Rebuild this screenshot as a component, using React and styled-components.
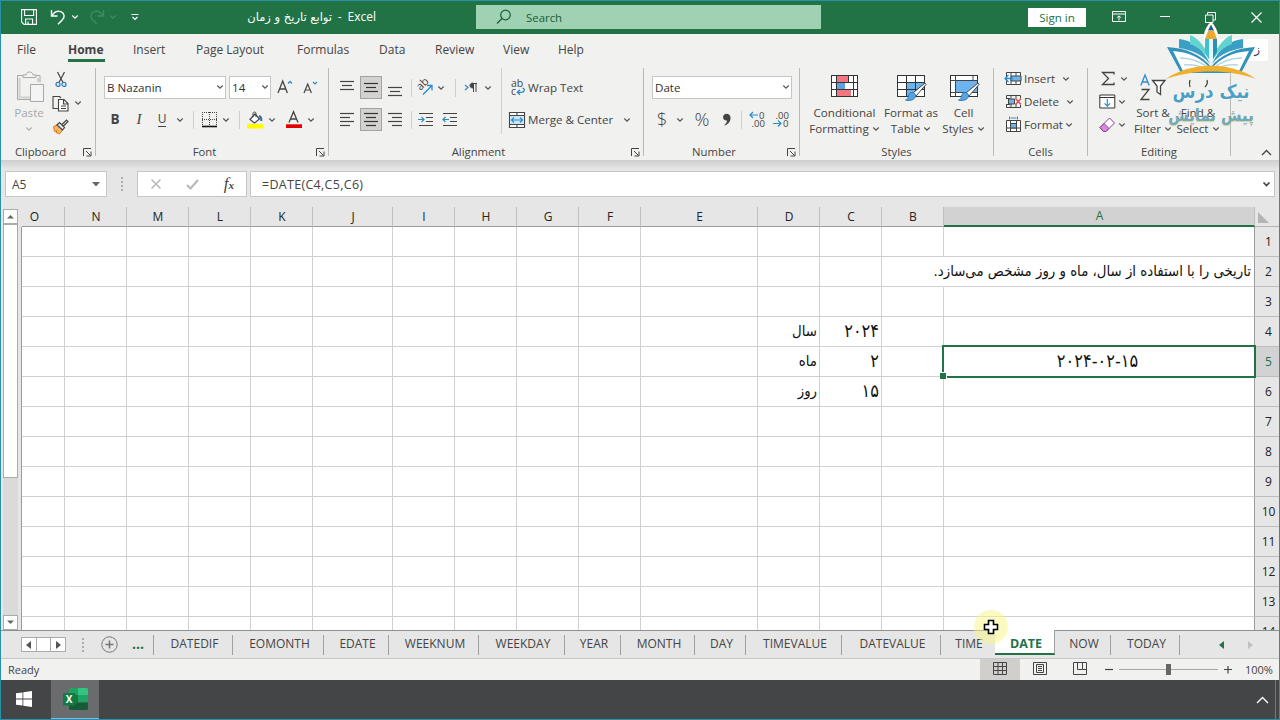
import React from "react";
import styled, { createGlobalStyle, css } from "styled-components";

const sheetTabs = [
  { name: "DATEDIF", width: 79 },
  { name: "EOMONTH", width: 91 },
  { name: "EDATE", width: 65 },
  { name: "WEEKNUM", width: 90 },
  { name: "WEEKDAY", width: 86 },
  { name: "YEAR", width: 56 },
  { name: "MONTH", width: 74 },
  { name: "DAY", width: 51 },
  { name: "TIMEVALUE", width: 96 },
  { name: "DATEVALUE", width: 99 },
  { name: "TIME", width: 54 },
  { name: "DATE", width: 60, active: true },
  { name: "NOW", width: 56 },
  { name: "TODAY", width: 69 },
];

// the sheet is right-to-left, so column A is the last one on screen
const columns = ["O", "N", "M", "L", "K", "J", "I", "H", "G", "F", "E", "D", "C", "B", "A"];
const columnSizes = "43px 62px 62px 62px 62px 80px 62px 62px 62px 62px 117px 62px 62px 62px 311px";
const rows = Array.from({ length: 14 }, (_, i) => i + 1);

const values = {
  A2: "تاریخی را با استفاده از سال، ماه و روز مشخص می‌سازد.",
  D4: "سال",
  C4: "۲۰۲۴",
  D5: "ماه",
  C5: "۲",
  A5: "۲۰۲۴-۰۲-۱۵",
  D6: "روز",
  C6: "۱۵",
};

const menu = [
  { name: "File", gap: 16, width: 19 },
  { name: "Home", gap: 32, width: 37 },
  { name: "Insert", gap: 28, width: 32 },
  { name: "Page Layout", gap: 31, width: 71 },
  { name: "Formulas", gap: 30, width: 53 },
  { name: "Data", gap: 29, width: 27 },
  { name: "Review", gap: 29, width: 40 },
  { name: "View", gap: 28, width: 27 },
  { name: "Help", gap: 28, width: 27 },
];

// Small drawings

const Svg = ({ w, h, children, ...rest }) => (
  <svg width={w} height={h} viewBox={`0 0 ${w} ${h}`} fill="none" stroke="#444" strokeWidth="1" {...rest}>
    {children}
  </svg>
);

const Chevron = ({ color = "#555" }) => (
  <Svg w={8} h={6} stroke={color} strokeWidth="1.2">
    <path d="M1.3 1.5 4 4.2 6.7 1.5" />
  </Svg>
);

const Launcher = () => (
  <Svg w={9} h={9}>
    <path d="M.5 8V.5H8M3 3l4.5 4.5M8 3.5V8H3.5" />
  </Svg>
);

const Lines = ({ rows: list, boxed }) => (
  <Svg w={16} h={18} stroke={boxed ? "#333" : "#444"} strokeWidth="1.2">
    {list.map(([y, x, len]) => (
      <path key={y} d={`M${x} ${y}h${len}`} />
    ))}
  </Svg>
);

const SaveIcon = () => (
  <Svg w={16} h={16} stroke="#fff" strokeWidth="1.1">
    <path d="M.6.6h14.8v14.8H3L.6 13zM3.6.8v5.7h9V.8M4.6 15.2V10h7v5.2M7 12.5v2.5" />
  </Svg>
);

const UndoIcon = ({ flip, color = "#fff" }) => (
  <Svg w={16} h={16} stroke={color} strokeWidth="1.4">
    <path
      transform={flip ? "matrix(-1 0 0 1 16 0)" : undefined}
      d="M1.5 1v6h6M1.5 7C4 3.2 7.500 1.500 10.800 2.600c3.600 1.300 4.300 5.300 1.800 8L8 15.300"
    />
  </Svg>
);

const PasteIcon = () => (
  <Svg w={30} h={32} stroke="#a8a8a8">
    <path d="M7 4.5H1.5v24H15M20 4.5h4v7" />
    <path d="M3.5 7v19.5H15M22 7v4" stroke="#d0d0d0" strokeWidth="2" />
    <path d="M7 6.5V4h3c0-4 7-4 7 0h3v2.5z" fill="#f4f4f4" />
    <path d="M14.500 13.500h13v17h-13z" fill="#f4f4f4" />
  </Svg>
);

const CutIcon = () => (
  <Svg w={12} h={17} strokeWidth="1.2">
    <path d="M2.5 1 8 11.5M9.5 1 4 11.5" />
    <circle cx="3" cy="13.4" r="2" stroke="#2b7cbf" />
    <circle cx="9" cy="13.4" r="2" stroke="#2b7cbf" />
  </Svg>
);

const CopyIcon = () => (
  <Svg w={17} h={17} strokeWidth="1.1">
    <path d="M6 13.5H1V1.5h6.5L9 3" />
    <path d="M6.5 4.5H12l4 4V16H6.5zM11.5 4.5V9H16M9 11h5M9 13.5h5" fill="#fff" />
  </Svg>
);

const PainterIcon = () => (
  <Svg w={17} h={16}>
    <path d="M1.500 7.500 5 6l5.500 5-3 4-3.500-1.500 1-2-2.500 1z" fill="#fbb565" stroke="#d97a1c" />
    <path d="m5 6 2.500-2.500 5 5L10.500 11zM10 5.500l4.500-4.500 1.500 1.500L11.500 7" fill="#ededed" strokeWidth="1.2" />
  </Svg>
);

const BorderIcon = () => (
  <Svg w={17} h={17}>
    <path d="M1 1.500h15M1.500 1v13M15.500 1v13M1 8.500h15M8.500 1v13" strokeDasharray="1 1" />
    <path d="M1 15.500h15" stroke="#111" strokeWidth="1.6" />
  </Svg>
);

const FillIcon = () => (
  <Svg w={18} h={18}>
    <path d="M4 8.500 9 3l4.500 5L8.500 12z" fill="#fff" strokeWidth="1.2" />
    <path d="M7 6V2.500c0-2 3-2 3 0V6" />
    <path d="M13 5c2.500.500 2.500 3 2.300 5" stroke="#2b6cb0" strokeWidth="2" />
    <rect x="1" y="13" width="16" height="4.5" fill="#ffff00" stroke="none" />
  </Svg>
);

const FontColorIcon = () => (
  <Svg w={17} h={18} strokeWidth="1.3">
    <path d="M4 11.500 8.500.800l4.500 10.700M5.500 8h6" />
    <rect x="1" y="13.3" width="16" height="3.7" fill="#e00000" stroke="none" />
  </Svg>
);

const AngleTextIcon = () => (
  <Svg w={18} h={17}>
    <text transform="translate(4.5 12) rotate(-45)" fontSize="11" fill="#444" stroke="none" fontFamily="Open Sans, sans-serif">
      ab
    </text>
    <path d="M7 15.500 15.500 7M11 6.500h5v5" stroke="#2b8ccc" strokeWidth="1.3" />
  </Svg>
);

const DirectionIcon = () => (
  <Svg w={14} h={12}>
    <path d="m1 3 3 2.500L1 8" stroke="#2b8ccc" strokeWidth="1.3" />
    <path d="M9 1.500h4M9.500 1.500V10M12 1.500V10" />
    <path d="M9 1c-4 0-4 5 0 5z" fill="#444" />
  </Svg>
);

const IndentIcon = ({ out }) => (
  <Svg w={16} h={15} strokeWidth="1.2">
    <path d="M1 1.500h14M8 5.500h7M8 9.500h7M1 13.500h14" />
    <path d={out ? "M7 7.500H1M3.500 5 1 7.500 3.500 10" : "M0 7.500h6M3.500 5 6 7.500 3.500 10"} stroke="#2b8ccc" />
  </Svg>
);

const WrapIcon = () => (
  <Svg w={15} h={17}>
    <g fill="#444" stroke="none" fontFamily="Open Sans, sans-serif" fontSize="10.5">
      <text x="0" y="8">ab</text>
      <text x="0" y="16">c</text>
    </g>
    <path d="M11.500 9c3 1 2 4.300-1 4.300H6.500M9 10.800 6.300 13.300 9 15.800" stroke="#2b8ccc" strokeWidth="1.3" />
  </Svg>
);

const MergeIcon = () => (
  <Svg w={16} h={16}>
    <path d="M.5.5h15v15H.5zM.5 3.500h15M.5 12.500h15M8 .500v3M8 12.500v3" fill="#fff" strokeWidth="1.1" />
    <path d="M1 4h14v8H1z" fill="#cde6f7" stroke="none" />
    <path d="M2.500 8h11M5 5.500 2.500 8 5 10.500M11 5.500 13.500 8 11 10.500" stroke="#2b8ccc" strokeWidth="1.2" />
  </Svg>
);

const DecimalIcon = ({ less }) => (
  <Svg w={17} h={17}>
    <g fill="#444" stroke="none" fontFamily="Open Sans, sans-serif" fontSize="9.5">
      <text x={less ? 2.5 : 10} y="7.5">{less ? ".00" : "0"}</text>
      <text x={less ? 10 : 2.5} y="16">{less ? "0" : ".00"}</text>
    </g>
    <path d={less ? "M0 12.500h8M5 9.500l3 3-3 3" : "M9 4H1M4 1 1 4l3 3"} stroke="#2b8ccc" strokeWidth="1.2" />
  </Svg>
);

const ConditionalIcon = () => (
  <Svg w={29} h={24}>
    <path d="M1.5 1.5h26v21h-26z" fill="#fff" />
    <path d="M6 1.5h12v7H6zM6 15.5h15v7H6z" fill="#f4777f" stroke="none" />
    <path d="M6 8.5h9v7H6z" fill="#5ba3e0" stroke="none" />
    <path d="M6.5 1v22M18.5 1v7.5M23.5 1v22M1 8.5h26.500M1 15.500h26.500M1.500 1.500h26v21h-26z" stroke="#333" />
  </Svg>
);

const Brush = () => (
  <>
    <path d="M29 9 17 19l3 3L30 10.500z" fill="#fff" />
    <path d="M16 18.500c2.500 0 4.500 2.500 3 5-1.500 3-6.500 3.500-9.500 2.500 2.500-.5 2.500-2 3-4 .5-2 1.500-3.500 3.500-3.500z" fill="#5ba3e0" stroke="#2b7cbf" />
  </>
);

const FormatTableIcon = () => (
  <Svg w={30} h={28}>
    <path d="M1.5 1.5h27v21h-27z" fill="#fff" />
    <path d="M10 8h18v7.500H10zM10 15h9v7.500h-9z" fill="#6db4ee" stroke="none" />
    <path d="M1.500 1.500h27v21h-27zM10.500 1v22M19.500 1v22M1 8.500h27M1 15.500h27" stroke="#333" />
    <Brush />
  </Svg>
);

const CellStylesIcon = () => (
  <Svg w={30} h={28}>
    <path d="M1.5 1.5h27v21h-27z" fill="#fff" />
    <path d="M6.500 1v22M1 6.500h27M1 18.500h6M24 1v6" />
    <path d="M6.500 6.500h22v12h-22z" fill="#6db4ee" />
    <path d="M1.500 1.500h27v21h-27z" stroke="#333" />
    <Brush />
  </Svg>
);

const InsertIcon = () => (
  <Svg w={17} h={15}>
    <path d="M1.5 1.5h14v12h-14zM6 1.5v12M11 1.5v12" fill="#fff" />
    <path d="M6 5h10v5H6z" fill="#6db4ee" />
    <path d="M8 7.500H0M3.500 4 0 7.500 3.500 11" stroke="#2b8ccc" strokeWidth="1.3" />
  </Svg>
);

const DeleteIcon = () => (
  <Svg w={17} h={15}>
    <path d="M1.500 4V1.500h14V4M1.500 11v2.500h14V11M6 1.500v3M11 1.500v3M6 10v3.500M11 10v3.500M1 4.500h4M1 10.500h4" />
    <path d="M3.500 5h6v5h-6z" fill="#6db4ee" />
    <path d="m10.500 4.500 5.500 6M16 4.500l-5.500 6" stroke="#e0474c" strokeWidth="1.3" />
  </Svg>
);

const FormatIcon = () => (
  <Svg w={17} h={17}>
    <path d="M1.500 4.500h14v11h-14zM5.500 4.500v11M11.500 4.500v11M1.500 12h14" fill="#fff" />
    <path d="M5.500 7.500h6V12h-6z" fill="#6db4ee" />
    <path d="M5.500 2h6M4.500.500v3M12.500.500v3" stroke="#2b8ccc" />
  </Svg>
);

const FillDownIcon = () => (
  <Svg w={17} h={15}>
    <path d="M.8 1h15v13h-15zM.8 3.500h15" fill="#fff" stroke="#333" />
    <path d="M8.300 5v7M5.500 9.300l2.800 2.800 2.800-2.800" stroke="#2b8ccc" strokeWidth="1.2" />
  </Svg>
);

const EraserIcon = () => (
  <Svg w={17} h={16} stroke="#8e3a9d">
    <path d="M1 10.500 10.500 1 15.500 6 7 14.500H4.500z" fill="#fff" />
    <path d="m1 10.500 4-4 5 5-3 3H4.500z" fill="#d78ad8" />
  </Svg>
);

const SortFilterIcon = () => (
  <Svg w={26} h={28} strokeWidth="1.3">
    <path d="M.8 11.500 5 1l4.200 10.500M2.300 8h5.400" stroke="#2b8ccc" />
    <path d="M1.500 15.500H9L1 25.500h8.500" />
    <path d="M12.500 6.500h12.500l-4.500 5.500v8.500l-3.500-2.500v-6z" fill="#fff" />
  </Svg>
);

const GridViewIcon = () => (
  <Svg w={14} h={13}>
    <path d="M.5.5h13v12H.5zM5 .5v12M9.500.5v12M.5 4.500h13M.5 8.500h13" />
  </Svg>
);

const PageViewIcon = () => (
  <Svg w={14} h={13}>
    <path d="M.5.5h13v12H.5zM3.500 2.500h7v8h-7zM5 4.500h4M5 6.500h4M5 8.500h4" />
  </Svg>
);

const BreakViewIcon = () => (
  <Svg w={14} h={13}>
    <path d="M.5.5h13v12H.5zM4.500.5v7h5v-7M9.500 7.500H13" />
  </Svg>
);

const WindowsIcon = () => (
  <Svg w={16} h={16} stroke="none" fill="#fff">
    <path d="M0 2.300 6.500 1.400v6.100H0zM7.300 1.300 16 0v7.500H7.300zM0 8.400h6.500v6.200L0 13.700zM7.300 8.400H16V16l-8.700-1.300z" />
  </Svg>
);

const ExcelIcon = () => (
  <Svg w={25} h={22} stroke="none">
    <path d="M6 1.500C6 .7 6.700 0 7.500 0H15v7H6z" fill="#21a366" />
    <path d="M15 0h8.500c.8 0 1.500.7 1.500 1.500V7H15z" fill="#33c481" />
    <path d="M6 7h9v7.500H6z" fill="#107c41" />
    <path d="M15 7h10v7.500H15z" fill="#21a366" />
    <path d="M6 14.500h19v6c0 .8-.7 1.500-1.500 1.500h-16c-.8 0-1.500-.7-1.500-1.500z" fill="#185c37" />
    <rect y="5" width="12.5" height="12.5" rx="1" fill="#107c41" />
    <text x="6.2" y="15" textAnchor="middle" fontSize="10" fontWeight="700" fill="#fff" fontFamily="Open Sans, sans-serif">
      X
    </text>
  </Svg>
);

const BookLogo = () => (
  <Svg w={92} h={62} stroke="none">
    <path d="M46 0c3 2 7 9 7 13v12H39V13c0-4 4-11 7-13z" fill="#fff" />
    <path d="M46 2.500 49 8.500H43z" fill="#245b84" />
    <path d="m43 9-3 8h12l-3-8z" fill="#f0a92e" />
    <path d="M14 17c12 1 24 9 31 25C37 32 26 28 14 26zM78 17c-12 1-24 9-31 25 8-10 19-14 31-16z" fill="#3a9fc4" />
    <path d="M25 13c9 3 17 14 20.500 27C40 30 33 25 25 22zM67 13c-9 3-17 14-20.500 27C52 30 59 25 67 22z" fill="#62d3cf" />
    <path d="M40 17h4v20l-4-7z" fill="#3fc0d0" />
    <path d="M44 17h4v20l-2 5-2-5z" fill="#e4fafa" />
    <path d="M48 17h4v13l-4 7z" fill="#2c8fb5" />
    <path d="M2 25c19 1 35 8 44 20C55 33 71 26 90 25L76 51H16z" fill="#3193b9" />
    <path d="M8 29c16 1 31 8 38 19 7-11 22-18 38-19L73 51c-9-1-18-3-27-3s-18 2-27 3z" fill="#fff" />
    <path d="M15 36c11 0 22 4 29 11M19 43c8-1 16 1 23 4M77 36c-11 0-22 4-29 11M73 43c-8-1-16 1-23 4" stroke="#b6d6df" strokeWidth="1.3" />
    <path d="M1 57c24-17 64-18 90 0-27-10-62-10-90 0z" fill="#f0b02f" />
  </Svg>
);

const CrossCursor = () => (
  <Svg w={16} h={16}>
    <path d="M5.500 1.500h5v4h4v5h-4v4h-5v-4h-4v-5h4z" fill="#fff" stroke="#000" strokeWidth="1.6" />
  </Svg>
);

export default function App() {
  return (
    <Window>
      <GlobalStyle />
      <TitleBar>
        <Slot $w={16} $ml={20}><SaveIcon /></Slot>
        <Slot $w={16} $ml={13}><UndoIcon /></Slot>
        <Slot $w={8} $ml={5}><Chevron color="#fff" /></Slot>
        <Slot $w={16} $ml={10}><UndoIcon flip color="#3f8b60" /></Slot>
        <Slot $w={8} $ml={4}><Chevron color="#3f8b60" /></Slot>
        <Slot $w={10} $ml={13}>
          <Svg w={10} h={8} stroke="#fff" strokeWidth="1.2"><path d="M1.5 1.5h7M2.5 4 5 6.500 7.500 4" /></Svg>
        </Slot>
        <FileName dir="ltr">
          <bdi>توابع تاریخ و زمان</bdi>
          <span>-</span>
          <span>Excel</span>
        </FileName>
        <SearchBox>
          <Svg w={16} h={16} stroke="#185c37" strokeWidth="1.2">
            <circle cx="9.5" cy="6" r="4.8" />
            <path d="M6 9.500 1 14.500" />
          </Svg>
          Search
        </SearchBox>
        <SignIn>Sign in</SignIn>
        <Slot $w={14} $ml={26}>
          <Svg w={14} h={12} stroke="#fff"><path d="M.5.5h13v10H.5zM.5 3h13M7 9.500V5M5 6.800l2-2 2 2" /></Svg>
        </Slot>
        <Slot $w={10} $ml={34}>
          <Svg w={10} h={3} stroke="#fff"><path d="M0 .5h10" /></Svg>
        </Slot>
        <Slot $w={11} $ml={35}>
          <Svg w={11} h={11} stroke="#fff"><path d="M.5 3H8v7.500H.5zM2.500 3V.5h8V8H8" /></Svg>
        </Slot>
        <Slot $w={11} $ml={35}>
          <Svg w={11} h={11} stroke="#fff" strokeWidth="1.2"><path d="m.5.5 10 10M10.500.5l-10 10" /></Svg>
        </Slot>
      </TitleBar>

      <MenuBar>
        {menu.map((m) => (
          <MenuItem key={m.name} $gap={m.gap} $w={m.width} $active={m.name === "Home"}>
            {m.name}
          </MenuItem>
        ))}
        <ShareBox>ز</ShareBox>
      </MenuBar>

      <Ribbon>
        <ClipboardGroup />
        <FontGroup />
        <AlignmentGroup />
        <NumberGroup />
        <StylesGroup />
        <CellsGroup />
        <EditingGroup />
        <Collapse>
          <Svg w={11} h={7} strokeWidth="1.3"><path d="m1 6 4.500-4.500L10 6" /></Svg>
        </Collapse>
      </Ribbon>

      <FormulaBar>
        <NameBox>
          A5
          <Svg w={8} h={5} stroke="none"><path d="M0 0h8L4 4.500z" fill="#666" /></Svg>
        </NameBox>
        <Slot $w={30}><Dots /></Slot>
        <FormulaButtons>
          <Svg w={12} h={12} stroke="#b8b8b8" strokeWidth="1.5"><path d="m1.500 1.500 9 9M10.500 1.500l-9 9" /></Svg>
          <Svg w={13} h={11} stroke="#b8b8b8" strokeWidth="2"><path d="m1 6 3.500 3.500L12 1" /></Svg>
          <Fx>f<small>x</small></Fx>
        </FormulaButtons>
        <FormulaInput>
          =DATE(C4,C5,C6)
          <Svg w={9} h={7} strokeWidth="1.7"><path d="m1.500 1.500 3 3 3-3" /></Svg>
        </FormulaInput>
      </FormulaBar>

      <Sheet>
        <ScrollColumn>
          <ScrollButton><Svg w={8} h={5} stroke="none"><path d="M0 4.500h7L3.500 1z" fill="#666" /></Svg></ScrollButton>
          <ScrollThumb />
          <ScrollTrack />
          <ScrollButton><Svg w={8} h={5} stroke="none"><path d="M0 .5h7L3.500 4z" fill="#666" /></Svg></ScrollButton>
        </ScrollColumn>
        <Grid>
          <HeaderRow>
            {columns.map((c) => (
              <ColumnHead key={c} $first={c === "O"} $selected={c === "A"}>{c}</ColumnHead>
            ))}
            <Corner>
              <Svg w={11} h={11} stroke="none"><path d="M0 0v11h11z" fill="#b5b5b5" /></Svg>
            </Corner>
          </HeaderRow>
          {rows.map((r) => (
            <Row key={r}>
              {columns.map((c) => (
                <Cell
                  key={c}
                  $center={c === "A" && r === 5}
                  $edge={c === "A"}
                  $open={c === "B" && r === 2}
                  $selected={c === "A" && r === 5}
                  $digits={c === "C" || (c === "A" && r === 5)}
                >
                  {values[c + r] && <span dir={c === "A" && r === 5 ? "ltr" : "rtl"}>{values[c + r]}</span>}
                </Cell>
              ))}
              <RowHead $selected={r === 5}>{r}</RowHead>
            </Row>
          ))}
        </Grid>
      </Sheet>

      <TabStrip>
        <TabNav>
          <span><Svg w={5} h={8} stroke="none"><path d="M5 0v8L0 4z" fill="#555" /></Svg></span>
          <span />
          <span><Svg w={5} h={8} stroke="none"><path d="M0 0v8l5-4z" fill="#555" /></Svg></span>
        </TabNav>
        <Slot $w={34}><Dots /></Slot>
        <Slot $w={16} $ml={1}>
          <Svg w={17} h={17} stroke="#777"><circle cx="8.5" cy="8.5" r="7.7" /><path d="M8.500 4.500v8M4.500 8.500h8" strokeWidth="1.5" /></Svg>
        </Slot>
        <More>...</More>
        {sheetTabs.map((t) => (
          <SheetTab key={t.name} $w={t.width} $active={t.active} $flat={t.name === "TIME"}>{t.name}</SheetTab>
        ))}
        <Slot $w={6} $ml={38}><Svg w={5} h={8} stroke="none"><path d="M5 0v8L0 4z" fill="#217346" /></Svg></Slot>
        <Slot $w={6} $ml={23}><Svg w={5} h={8} stroke="none"><path d="M0 0v8l5-4z" fill="#c0c0c0" /></Svg></Slot>
      </TabStrip>

      <StatusBar>
        <Ready>Ready</Ready>
        <ViewButton $active><GridViewIcon /></ViewButton>
        <ViewButton><PageViewIcon /></ViewButton>
        <ViewButton><BreakViewIcon /></ViewButton>
        <Zoom>
          <Svg w={8} h={8} strokeWidth="1.2"><path d="M0 3.500h8" /></Svg>
          <Slider><i /></Slider>
          <Svg w={8} h={8} strokeWidth="1.2"><path d="M0 3.500h8M4 0v7.500" /></Svg>
        </Zoom>
        <Percent>100%</Percent>
      </StatusBar>

      <Taskbar>
        <TaskButton><WindowsIcon /></TaskButton>
        <TaskButton $active><ExcelIcon /></TaskButton>
        <Tray>
          <Svg w={13} h={8} stroke="#fff" strokeWidth="1.4"><path d="m1 7 5.500-5.500L12 7" /></Svg>
        </Tray>
      </Taskbar>

      <Pointer><CrossCursor /></Pointer>
      <Watermark>
        <BookLogo />
        <strong>نیک درس</strong>
        <em>پیش نمایش</em>
      </Watermark>
    </Window>
  );
}

const GroupLabel = ({ text, launcher }) => (
  <Label>
    <span>{text}</span>
    {launcher && <Slot $w={15}><Launcher /></Slot>}
  </Label>
);

const ClipboardGroup = () => (
  <Group $w={95}>
    <ClipBody>
      <PasteColumn>
        <PasteIcon />
        <span>Paste</span>
        <Chevron color="#b0b0b0" />
      </PasteColumn>
      <ToolColumn>
        <div><Slot $w={17}><CutIcon /></Slot></div>
        <div><Slot $w={17}><CopyIcon /></Slot><Slot $w={8} $ml={5}><Chevron /></Slot></div>
        <div><Slot $w={17}><PainterIcon /></Slot></div>
      </ToolColumn>
    </ClipBody>
    <GroupLabel text="Clipboard" launcher />
  </Group>
);

const FontGroup = () => (
  <Group $w={233}>
    <Tools>
      <ToolRow $pl={8}>
        <Select $w={122}>B Nazanin<Chevron /></Select>
        <Select $w={42} $ml={3}>14<Chevron /></Select>
        <Slot $w={28}>
          <Svg w={16} h={16} strokeWidth="1.3"><path d="M1 13 5.700 1l4.700 12M2.800 9h6" /><path d="m11 3.500 2-2 2 2" stroke="#2b8ccc" /></Svg>
        </Slot>
        <Slot $w={22}>
          <Svg w={16} h={16} strokeWidth="1.2"><path d="M2 13 5.700 4l3.700 9M3.500 10h4.500" /><path d="m11 2 2 2 2-2" stroke="#2b8ccc" /></Svg>
        </Slot>
      </ToolRow>
      <ToolRow $pl={7}>
        <Slot $w={24}><Letter $bold>B</Letter></Slot>
        <Slot $w={24}><Letter $italic>I</Letter></Slot>
        <Slot $w={22}><Letter $under>U</Letter></Slot>
        <Slot $w={14}><Chevron /></Slot>
        <Slot $w={12}><Divider /></Slot>
        <Slot $w={20}><BorderIcon /></Slot>
        <Slot $w={14}><Chevron /></Slot>
        <Slot $w={13}><Divider /></Slot>
        <Slot $w={18}><FillIcon /></Slot>
        <Slot $w={16}><Chevron /></Slot>
        <Slot $w={26}><FontColorIcon /></Slot>
        <Slot $w={9}><Chevron /></Slot>
      </ToolRow>
    </Tools>
    <GroupLabel text="Font" launcher />
  </Group>
);

const AlignmentGroup = () => (
  <Group $w={315}>
    <AlignBody>
      <Tools>
        <ToolRow $pl={6}>
          <Slot $w={24}><Lines rows={[[2.5, 1, 14], [6.5, 3, 10], [10.5, 1, 14]]} /></Slot>
          <Slot $w={24}><Boxed><Lines boxed rows={[[4.5, 1, 14], [8.5, 3, 10], [12.5, 1, 14]]} /></Boxed></Slot>
          <Slot $w={24}><Lines rows={[[8.5, 1, 14], [12.5, 3, 10], [16.5, 1, 14]]} /></Slot>
          <Slot $w={8}><Divider /></Slot>
          <Slot $w={16} $ml={2}><AngleTextIcon /></Slot>
          <Slot $w={14} $ml={1}><Chevron /></Slot>
          <Slot $w={14}><Divider /></Slot>
          <Slot $w={16} $ml={1}><DirectionIcon /></Slot>
          <Slot $w={14} $ml={2}><Chevron /></Slot>
        </ToolRow>
        <ToolRow $pl={6}>
          <Slot $w={24}><Lines rows={[[2.5, 1, 14], [6.5, 1, 10], [10.5, 1, 14], [14.5, 1, 10]]} /></Slot>
          <Slot $w={24}><Boxed><Lines boxed rows={[[2.5, 1, 14], [6.5, 3, 10], [10.5, 1, 14], [14.5, 3, 10]]} /></Boxed></Slot>
          <Slot $w={24}><Lines rows={[[2.5, 1, 14], [6.5, 5, 10], [10.5, 1, 14], [14.5, 5, 10]]} /></Slot>
          <Slot $w={8}><Divider /></Slot>
          <Slot $w={16} $ml={3}><IndentIcon /></Slot>
          <Slot $w={16} $ml={8}><IndentIcon out /></Slot>
        </ToolRow>
      </Tools>
      <WrapTools>
        <ToolRow $pl={9}>
          <Slot $w={15}><WrapIcon /></Slot>
          <Caption $w={54} $ml={2}>Wrap Text</Caption>
        </ToolRow>
        <ToolRow $pl={7}>
          <Slot $w={16}><MergeIcon /></Slot>
          <Caption $w={86} $ml={3}>Merge &amp; Center</Caption>
          <Slot $w={8} $ml={9}><Chevron /></Slot>
        </ToolRow>
      </WrapTools>
    </AlignBody>
    <GroupLabel text="Alignment" launcher />
  </Group>
);

const NumberGroup = () => (
  <Group $w={156}>
    <Tools>
      <ToolRow $pl={8}><Select $w={140}>Date<Chevron /></Select></ToolRow>
      <ToolRow $pl={8}>
        <Slot $w={20}><Symbol>$</Symbol></Slot>
        <Slot $w={16}><Chevron /></Slot>
        <Slot $w={28}><Symbol>%</Symbol></Slot>
        <Slot $w={20}>
          <Svg w={9} h={13} stroke="none"><path d="M1 4c0-4 7-5 7.500.5C9 9 5 12 2 12.500c1.500-1.500 3-3 3-5C3 8 1 6.500 1 4z" fill="#444" /></Svg>
        </Slot>
        <Slot $w={10}><Divider /></Slot>
        <Slot $w={17} $ml={3}><DecimalIcon /></Slot>
        <Slot $w={17} $ml={7}><DecimalIcon less /></Slot>
      </ToolRow>
    </Tools>
    <GroupLabel text="Number" launcher />
  </Group>
);

const StylesGroup = () => (
  <Group $w={194}>
    <BigRow $pl={9}>
      <BigButton $w={71}>
        <BigIcon><ConditionalIcon /></BigIcon>
        <span>Conditional</span>
        <span>Formatting <Chevron /></span>
      </BigButton>
      <BigButton $w={62}>
        <BigIcon><FormatTableIcon /></BigIcon>
        <span>Format as</span>
        <span>Table <Chevron /></span>
      </BigButton>
      <BigButton $w={43}>
        <BigIcon><CellStylesIcon /></BigIcon>
        <span>Cell</span>
        <span>Styles <Chevron /></span>
      </BigButton>
    </BigRow>
    <GroupLabel text="Styles" />
  </Group>
);

const CellsGroup = () => (
  <Group $w={94}>
    <SmallList>
      <div><InsertIcon /><Caption $w={30} $ml={2}>Insert</Caption><Slot $w={8} $ml={8}><Chevron /></Slot></div>
      <div><DeleteIcon /><Caption $w={34} $ml={2}>Delete</Caption><Slot $w={8} $ml={8}><Chevron /></Slot></div>
      <div><FormatIcon /><Caption $w={38} $ml={2}>Format</Caption><Slot $w={8} $ml={3}><Chevron /></Slot></div>
    </SmallList>
    <GroupLabel text="Cells" />
  </Group>
);

const EditingGroup = () => (
  <Group $w={143}>
    <EditBody>
      <SmallList>
        <div>
          <Slot $w={17}><Svg w={14} h={15} strokeWidth="1.3"><path d="M13 3.500V1.500H1.500l6 6-6 6H13v-2" /></Svg></Slot>
          <Slot $w={8} $ml={4}><Chevron /></Slot>
        </div>
        <div><FillDownIcon /><Slot $w={8} $ml={2}><Chevron /></Slot></div>
        <div><EraserIcon /><Slot $w={8} $ml={2}><Chevron /></Slot></div>
      </SmallList>
      <BigButton $w={36}>
        <BigIcon><SortFilterIcon /></BigIcon>
        <span>Sort &amp;</span>
        <span>Filter <Chevron /></span>
      </BigButton>
      <BigButton $w={54}>
        <BigIcon>
          <Svg w={22} h={24} strokeWidth="1.3"><path d="M3 6c-1 3-1 4 0 7M20 6c1 3 0 5-2 7" /></Svg>
        </BigIcon>
        <span>Find &amp;</span>
        <span>Select <Chevron /></span>
      </BigButton>
    </EditBody>
    <GroupLabel text="Editing" />
  </Group>
);

const arabicFont = `"DejaVu Sans Condensed", "DejaVu Sans", sans-serif`;

const GlobalStyle = createGlobalStyle`
  * {
    box-sizing: border-box;
  }
  body {
    margin: 0;
    overflow: hidden;
    font-family: "Open Sans", "DejaVu Sans", sans-serif;
    font-size: 12px;
    color: #444;
  }
  svg {
    display: block;
    flex: none;
    overflow: visible;
  }
`;

const Window = styled.div`
  position: relative;
  display: flex;
  flex-direction: column;
  width: 1280px;
  height: 720px;
  border: 1px solid #2a8fa8;
  background: #e6e6e6;
  overflow: hidden;
`;
const Slot = styled.div`
  display: flex;
  flex: none;
  align-items: center;
  justify-content: center;
  width: ${(props) => props.$w}px;
  margin-left: ${(props) => props.$ml || 0}px;
`;
const TitleBar = styled.header`
  display: flex;
  align-items: center;
  height: 33px;
  padding-bottom: 1px;
  background: #217346;
  color: #fff;
`;
const FileName = styled.div`
  display: flex;
  justify-content: space-between;
  width: 129px;
  margin-left: 107px;
  line-height: 16px;
  white-space: nowrap;
  bdi {
    width: 85px;
    font-family: "DejaVu Sans", sans-serif;
    font-size: 11.5px;
  }
`;
const SearchBox = styled.div`
  display: flex;
  align-items: center;
  gap: 14px;
  width: 345px;
  height: 24px;
  margin-left: 100px;
  padding-left: 20px;
  background: #9fd1b3;
  color: #185c37;
  font-size: 11.4px;
`;
const SignIn = styled.div`
  width: 58px;
  height: 19px;
  margin-left: 207px;
  background: #fff;
  color: #217346;
  font-size: 11.6px;
  line-height: 19px;
  text-align: center;
`;
const MenuBar = styled.nav`
  display: flex;
  height: 30px;
  background: #f1f1ef;
`;
const MenuItem = styled.div`
  flex: none;
  width: ${(props) => props.$w}px;
  height: 28px;
  margin-left: ${(props) => props.$gap}px;
  line-height: 31px;
  white-space: nowrap;
  ${(props) =>
    props.$active &&
    css`
      border-bottom: 3px solid #217346;
      font-weight: 700;
    `}
`;
const ShareBox = styled.div`
  width: 63px;
  height: 22px;
  margin: 5px 11px 0 auto;
  padding-right: 8px;
  border-radius: 2px;
  background: #fff;
  line-height: 20px;
  text-align: right;
`;
const Ribbon = styled.div`
  display: flex;
  height: 96px;
  padding-top: 4px;
  background: #f1f1ef;
  font-size: 11.6px;
`;
const Group = styled.section`
  display: flex;
  flex: none;
  flex-direction: column;
  width: ${(props) => props.$w}px;
  height: 88px;
  border-right: 1px solid #b9b9b9;
`;
const Label = styled.div`
  display: flex;
  height: 16px;
  margin: auto 0 -4px;
  font-size: 11.3px;
  line-height: 16px;
  text-align: center;
  span {
    flex: 1;
  }
`;
const ClipBody = styled.div`
  display: flex;
`;
const PasteColumn = styled.div`
  display: flex;
  flex-direction: column;
  align-items: center;
  width: 56px;
  padding-top: 3px;
  color: #a8a8a8;
  svg:first-child {
    margin-left: 4px;
  }
  span {
    margin-bottom: 4px;
    line-height: 19px;
  }
`;
const ToolColumn = styled.div`
  display: flex;
  flex-direction: column;
  margin-left: -5px;
  > div {
    display: flex;
    height: 23.5px;
    align-items: center;
  }
`;
const Tools = styled.div`
  display: flex;
  flex-direction: column;
  gap: 5px;
  padding-top: 6px;
`;
const ToolRow = styled.div`
  display: flex;
  align-items: center;
  height: 27px;
  padding-left: ${(props) => props.$pl}px;
  white-space: nowrap;
`;
const AlignBody = styled.div`
  display: flex;
  ${Tools} {
    width: 172px;
  }
`;
const WrapTools = styled.div`
  display: flex;
  flex-direction: column;
  gap: 5px;
  height: 66px;
  padding-top: 6px;
  border-left: 1px solid #cfcfcf;
`;
const Select = styled.div`
  display: flex;
  align-items: center;
  justify-content: space-between;
  width: ${(props) => props.$w}px;
  height: 23px;
  margin-left: ${(props) => props.$ml || 0}px;
  padding: 0 1px 1px 2px;
  border: 1px solid #c6c6c6;
  background: #fff;
  color: #333;
`;
const Letter = styled.span`
  font-size: 13.5px;
  line-height: 16px;
  padding-bottom: 2px;
  font-weight: ${(props) => (props.$bold ? 700 : 400)};
  ${(props) =>
    props.$italic &&
    css`
      font-family: "Liberation Serif", serif;
      font-size: 15px;
      font-style: italic;
    `}
  ${(props) =>
    props.$under &&
    css`
      height: 14px;
      font-size: 12px;
      line-height: 12px;
      border-bottom: 1px solid #444;
    `}
`;
const Symbol = styled.span`
  padding-bottom: 2px;
  font-size: 18.5px;
  font-weight: 300;
  line-height: 20px;
`;
const Divider = styled.i`
  width: 1px;
  height: 18px;
  background: #cfcfcf;
`;
const Boxed = styled.div`
  height: 23px;
  padding: 2px;
  border: 1px solid #a3a3a3;
  background: #d3d2d0;
`;
const Caption = styled.span`
  width: ${(props) => props.$w}px;
  margin-left: ${(props) => props.$ml}px;
  padding-bottom: 1px;
  white-space: nowrap;
`;
const BigRow = styled.div`
  display: flex;
  padding-left: ${(props) => props.$pl}px;
`;
const BigButton = styled.div`
  display: flex;
  flex: none;
  flex-direction: column;
  align-items: center;
  width: ${(props) => props.$w}px;
  span {
    display: flex;
    align-items: center;
    gap: 3px;
    line-height: 16px;
    white-space: nowrap;
  }
`;
const BigIcon = styled.div`
  display: flex;
  height: 37px;
  padding-top: 6px;
`;
const SmallList = styled.div`
  display: flex;
  flex-direction: column;
  margin-top: -1px;
  padding-left: 11px;
  > div {
    display: flex;
    align-items: center;
    height: 23px;
  }
`;
const EditBody = styled.div`
  display: flex;
  ${SmallList} {
    width: 47px;
  }
`;
const Collapse = styled.div`
  margin: auto 7px 4px auto;
`;
const FormulaBar = styled.div`
  display: flex;
  height: 47px;
  padding: 11px 4px 10px;
  background: linear-gradient(#cdcdcd, #e6e6e6 9px);
`;
const boxed = css`
  display: flex;
  align-items: center;
  height: 26px;
  border: 1px solid #c6c6c6;
  background: #fff;
`;
const NameBox = styled.div`
  ${boxed}
  justify-content: space-between;
  width: 102px;
  padding: 0 6px;
`;
const Dots = styled.i`
  width: 2px;
  height: 14px;
  background: repeating-linear-gradient(#adadad 0 2px, transparent 2px 4px);
`;
const FormulaButtons = styled.div`
  ${boxed}
  justify-content: space-between;
  width: 110px;
  padding: 0 12px;
`;
const Fx = styled.span`
  font: italic 400 17px "Liberation Serif", serif;
  small {
    font-size: 11px;
    font-weight: 700;
  }
`;
const FormulaInput = styled.div`
  ${boxed}
  flex: 1;
  justify-content: space-between;
  margin-left: 3px;
  padding: 0 3px 0 11px;
  font-size: 12.5px;
  letter-spacing: 0.3px;
`;
const Sheet = styled.main`
  display: flex;
  height: 423px;
  overflow: hidden;
`;
const ScrollColumn = styled.div`
  display: flex;
  flex: none;
  flex-direction: column;
  width: 20px;
  padding: 2px 3px 0 2px;
`;
const ScrollButton = styled.div`
  display: flex;
  align-items: center;
  justify-content: center;
  height: 15px;
  border: 1px solid #ababab;
  background: #fff;
`;
const ScrollThumb = styled.div`
  height: 254px;
  border: 1px solid #ababab;
  background: #fff;
`;
const ScrollTrack = styled.div`
  flex: 1;
  background: #dadada;
`;
const Grid = styled.div`
  flex: none;
`;
const HeaderRow = styled.div`
  display: grid;
  grid-template-columns: 1px ${columnSizes} 24px;
  height: 20px;
  &::before {
    content: "";
  }
`;
const ColumnHead = styled.div`
  padding: 0 ${(props) => (props.$first ? 18 : 0)}px 0 1px;
  border-right: 1px solid #c0c0c0;
  border-bottom: 1px solid #9b9b9b;
  color: #222;
  line-height: 19px;
  text-align: center;
  ${(props) =>
    props.$selected &&
    css`
      border-bottom: 2px solid #217346;
      background: #d2d2d2;
      color: #217346;
      line-height: 18px;
    `}
`;
const Corner = styled.div`
  padding: 5px 0 0 3px;
  border-bottom: 1px solid #b5b5b5;
`;
const Row = styled.div`
  display: grid;
  grid-template-columns: ${columnSizes} 24px;
  height: 30px;
  border-left: 1px solid #9b9b9b;
`;
const Cell = styled.div`
  position: relative;
  display: flex;
  align-items: center;
  justify-content: ${(props) => (props.$center ? "center" : "flex-end")};
  min-width: 0;
  height: 30px;
  padding: 0 ${(props) => (props.$edge ? 3 : 2)}px 1px 0;
  border-right: 1px solid ${(props) => (props.$open ? "#fff" : props.$edge ? "#9b9b9b" : "#d0d0d0")};
  border-bottom: 1px solid #d0d0d0;
  background: #fff;
  color: #111;
  font-family: ${arabicFont};
  font-size: ${(props) => (props.$digits ? 18 : 14.8)}px;
  line-height: 26px;
  white-space: nowrap;
  span {
    position: relative;
    z-index: 1;
  }
  ${(props) =>
    props.$selected &&
    css`
      &::before {
        content: "";
        position: absolute;
        inset: -2px -2px -2px -2px;
        border: 2px solid #217346;
        z-index: 1;
      }
      &::after {
        content: "";
        position: absolute;
        left: -4px;
        bottom: -3px;
        width: 6px;
        height: 6px;
        border: 1px solid #fff;
        border-width: 1px 1px 0 0;
        background: #217346;
        z-index: 2;
      }
    `}
`;
const RowHead = styled.div`
  padding-left: 3px;
  border-bottom: 1px solid #bdbdbd;
  background: ${(props) => (props.$selected ? "#d2d2d2" : "#e6e6e6")};
  color: ${(props) => (props.$selected ? "#217346" : "#222")};
  line-height: 29px;
  text-align: center;
`;
const TabStrip = styled.div`
  display: flex;
  align-items: center;
  height: 29px;
  padding-left: 20px;
  border-top: 1px solid #8f8f8f;
  border-bottom: 1px solid #c8c8c8;
`;
const TabNav = styled.div`
  display: flex;
  width: 45px;
  height: 15px;
  border: 1px solid #ababab;
  background: #fff;
  span {
    display: flex;
    flex: 1;
    align-items: center;
    justify-content: center;
    & + span {
      border-left: 1px solid #ababab;
    }
  }
`;
const More = styled.div`
  width: 37px;
  height: 20px;
  padding-left: 15px;
  border-right: 1px solid #a0a0a0;
  color: #217346;
  font-size: 14px;
  font-weight: 700;
  line-height: 18px;
`;
const SheetTab = styled.div`
  flex: none;
  width: ${(props) => props.$w}px;
  height: 20px;
  padding-left: 3px;
  line-height: 18px;
  text-align: center;
  border-right: 1px solid ${(props) => (props.$flat ? "transparent" : "#a0a0a0")};
  ${(props) =>
    props.$active &&
    css`
      align-self: flex-start;
      height: 25px;
      margin-top: -1px;
      border-bottom: 2px solid #217346;
      background: #fff;
      color: #217346;
      font-size: 12.5px;
      font-weight: 700;
      line-height: 27px;
    `}
`;
const StatusBar = styled.footer`
  display: flex;
  align-items: center;
  height: 21px;
  background: #f1f1ef;
  font-size: 11px;
`;
const Ready = styled.div`
  width: 979px;
  padding: 0 0 1px 7px;
`;
const ViewButton = styled.div`
  display: flex;
  align-items: center;
  justify-content: center;
  width: 40px;
  height: 21px;
  padding: 0 1px 2px 0;
  background: ${(props) => (props.$active ? "#d0cfcc" : "none")};
`;
const Zoom = styled.div`
  display: flex;
  align-items: center;
  gap: 6px;
  margin-left: 5px;
`;
const Slider = styled.div`
  display: flex;
  justify-content: center;
  width: 99px;
  height: 1px;
  background: #a5a5a5;
  i {
    width: 5px;
    height: 11px;
    margin-top: -5px;
    background: #666;
  }
`;
const Percent = styled.div`
  margin-left: 13px;
  padding-bottom: 1px;
`;
const Taskbar = styled.div`
  display: flex;
  height: 39px;
  background: #444547;
`;
const TaskButton = styled.div`
  display: flex;
  align-items: center;
  justify-content: center;
  width: ${(props) => (props.$active ? 48 : 50)}px;
  padding-right: ${(props) => (props.$active ? 0 : 4)}px;
  background: ${(props) => (props.$active ? "#6a6b6c" : "none")};
  border-bottom: 1px solid ${(props) => (props.$active ? "#76b9ed" : "transparent")};
`;
const Tray = styled.div`
  display: flex;
  align-items: center;
  margin: 0 3px 0 auto;
  padding-right: 6px;
  border-right: 1px solid #77797b;
`;
const Pointer = styled.div`
  position: absolute;
  left: 973px;
  top: 609px;
  display: flex;
  align-items: center;
  justify-content: center;
  width: 34px;
  height: 34px;
  border-radius: 50%;
  background: rgba(250, 245, 130, 0.5);
`;
const Watermark = styled.div`
  position: absolute;
  left: 1164px;
  top: 21px;
  display: flex;
  flex-direction: column;
  align-items: center;
  width: 92px;
  color: #4a9fc4;
  font-family: ${arabicFont};
  line-height: 24px;
  white-space: nowrap;
  text-shadow: 0 0 2px #fff;
  strong {
    margin-top: -4px;
    font-size: 18.5px;
  }
  em {
    color: #6fa9bb;
    font-size: 16.5px;
    font-style: normal;
    font-weight: 700;
    text-shadow: 0 1px 1px #d8cf9e;
  }
`;
